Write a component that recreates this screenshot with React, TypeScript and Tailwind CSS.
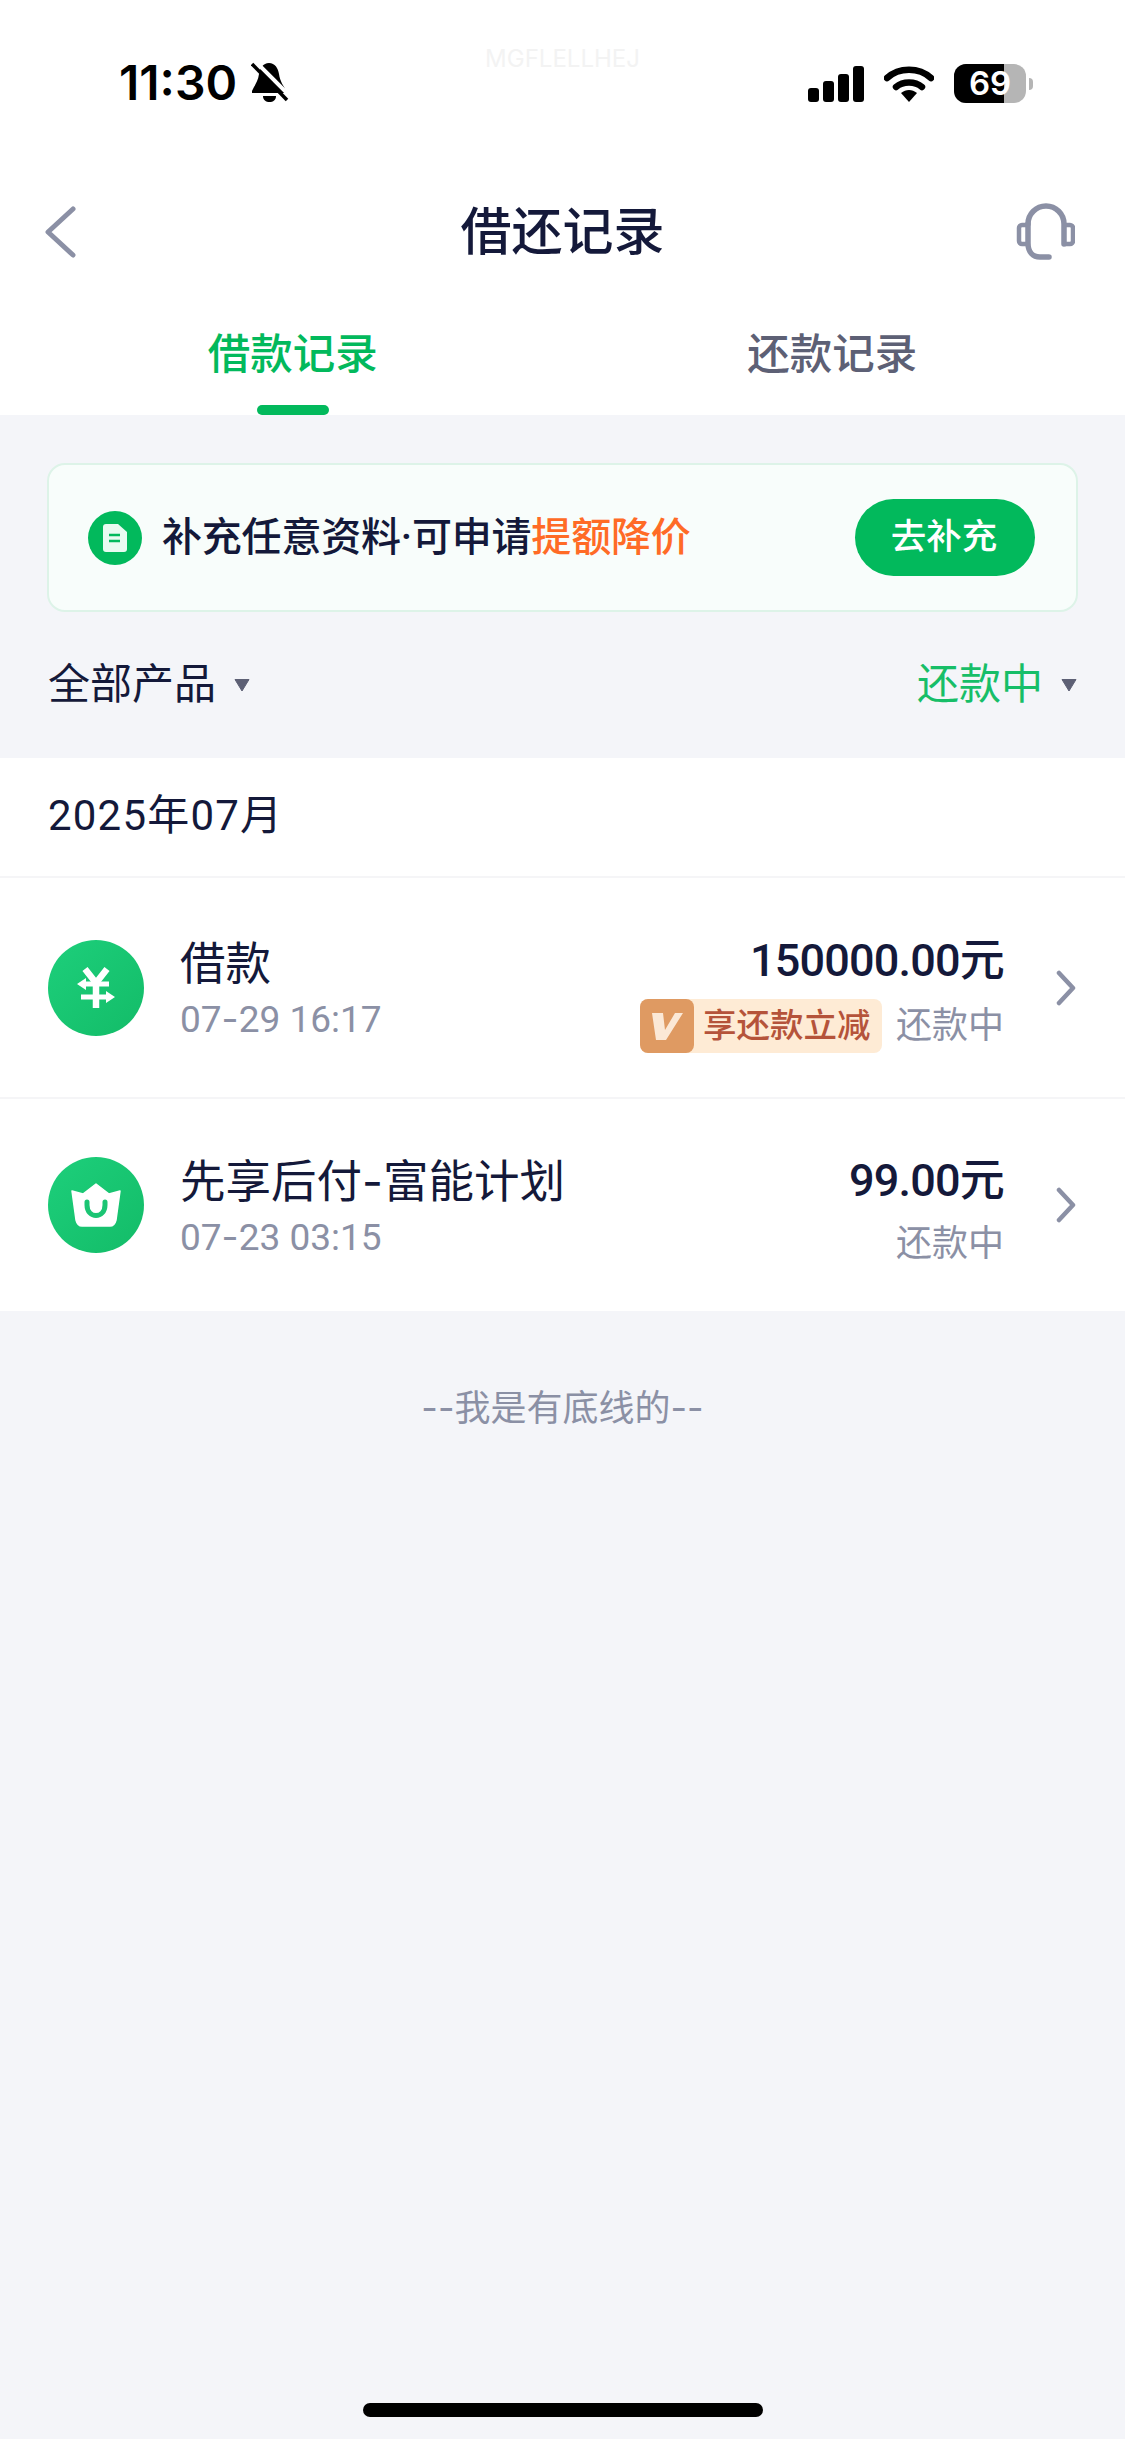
import React from "react";

const font = "font-['Roboto','Noto_Sans_CJK_SC',sans-serif]";

// Roboto's hyphen is too short next to CJK, Inter's is closer to the reference
function withDash(text: string) {
  const parts = text.split("-");
  return parts.map((part, i) => (
    <React.Fragment key={i}>
      {i > 0 && <span className="font-['Inter',sans-serif]">-</span>}
      {part}
    </React.Fragment>
  ));
}

function Chevron() {
  return (
    <svg width="20" height="36" viewBox="0 0 20 36" fill="none" className="shrink-0">
      <path d="M3 3l14 15L3 33" stroke="#8B90A5" strokeWidth="4.5" strokeLinecap="round" strokeLinejoin="round" />
    </svg>
  );
}

function Caret() {
  return (
    <svg width="16" height="14" viewBox="0 0 16 14" className="shrink-0">
      <path d="M1 1.5h14L8 13z" fill="#5D6075" stroke="#5D6075" strokeLinejoin="round" />
    </svg>
  );
}

function YuanIcon() {
  return (
    <svg width="96" height="96" viewBox="0 0 96 96" fill="none">
      <path d="M37 29l11 14 11-14" stroke="#fff" strokeWidth="6.500" />
      <path d="M48 42v26" stroke="#fff" strokeWidth="6.500" />
      <path d="M37 44h24M33 57h27" stroke="#fff" strokeWidth="5" />
      <path d="M29 44l9-6v12zM67 57l-9-6v12z" fill="#fff" />
    </svg>
  );
}

function BasketIcon() {
  return (
    <svg width="96" height="96" viewBox="0 0 96 96" fill="none">
      <path
        d="M24 34l11 3 13-10 13 10 11-3-4 29c-1 4-3 6-6 6H34c-3 0-5-2-6-6z"
        fill="#fff"
        stroke="#fff"
        strokeWidth="1.500"
        strokeLinejoin="round"
      />
      <path d="M39 45v3c0 14 18 14 18 0v-3" stroke="#1BC573" strokeWidth="5" strokeLinecap="round" />
    </svg>
  );
}

function StatusBar() {
  return (
    <div className="relative flex h-[164px] items-start justify-between pl-[119px] pr-[92px] pt-[56px]">
      <div className="absolute left-0 right-0 top-[45px] text-center font-['Inter',sans-serif] text-[24px] leading-[28px] text-[#f3f3f3]">
        MGFLELLHEJ
      </div>
      <div className="flex items-center gap-[14px]">
        <span className="font-['Inter',sans-serif] text-[48px] font-semibold leading-[54px] text-black">11:30</span>
        <svg width="38" height="42" viewBox="0 0 38 42">
          <path d="M18 1c6 0 9 5 10 11 1 8 5 12 7 17v2H1v-2c2-5 6-9 7-17 1-6 4-11 10-11z" fill="#000" />
          <path d="M12 34h13c0 4-3 6-6.500 6S12 38 12 34z" fill="#000" />
          <path d="M4 -1l35 35" stroke="#fff" strokeWidth="4" />
          <path d="M1 2l35 36" stroke="#000" strokeWidth="3.500" />
        </svg>
      </div>
      <div className="flex items-center gap-[20px] pt-[8px]">
        <div className="flex h-[36px] items-end gap-[4px]">
          <div className="h-[14px] w-[11px] rounded-[3px] bg-black" />
          <div className="h-[21px] w-[11px] rounded-[3px] bg-black" />
          <div className="h-[28px] w-[11px] rounded-[3px] bg-black" />
          <div className="h-[36px] w-[11px] rounded-[3px] bg-black" />
        </div>
        <svg width="50" height="36" viewBox="0 0 50 36" fill="none">
          <path d="M3 12c12-11 32-11 44 0" stroke="#000" strokeWidth="6.500" strokeLinecap="round" />
          <path d="M12 21c7-6 19-6 26 0" stroke="#000" strokeWidth="6.500" strokeLinecap="round" />
          <path d="M17 27c5-4 11-4 16 0l-8 9z" fill="#000" />
        </svg>
        <div className="flex items-center gap-[3px]">
          <div className="relative h-[39px] w-[72px] overflow-hidden rounded-[12px] bg-[#b5b5b5]">
            <div className="h-full w-[50px] bg-black" />
            <span className="absolute inset-0 flex items-center justify-center font-['Inter',sans-serif] text-[33px] font-semibold leading-none text-white">
              69
            </span>
          </div>
          <div className="h-[12px] w-[4px] rounded-r-full bg-[#b5b5b5]" />
        </div>
      </div>
    </div>
  );
}

function Row({ icon, title, date, amount, promo }: { icon: React.ReactNode; title: string; date: string; amount: string; promo?: boolean }) {
  return (
    <div className="flex items-center pl-[48px] pr-[49px] first:h-[221px] last:h-[212px] first:border-b-2 first:border-[#f5f5f7]">
      <div className="flex h-[96px] w-[96px] shrink-0 items-center justify-center rounded-full bg-gradient-to-br from-[#1DCF7B] to-[#13BC68]">
        {icon}
      </div>
      <div className="ml-[36px] flex-1 pt-[7px]">
        <div className="text-[45.500px] leading-[55px] text-[#14193A]">{withDash(title)}</div>
        <div className="text-[37px] leading-[53px] text-[#8B90A5]">{withDash(date)}</div>
      </div>
      <div className={`flex flex-col items-end ${promo ? "pt-[11px]" : "pt-[14px]"}`}>
        <div className="text-[45px] font-medium leading-[55px] tracking-[-0.8px] text-[#14193A]">{amount}</div>
        <div className={`flex h-[55px] items-center ${promo ? "mt-[11px]" : "mt-[8px]"}`}>
          {promo && (
            <div className="mr-[14px] flex h-[54px] w-[242px] items-center rounded-[8px] bg-[#FEEBD5]">
              <div className="flex h-[54px] w-[54px] items-center justify-center rounded-[8px] bg-[#DF9A62]">
                <svg width="32" height="32" viewBox="0 0 32 32">
                  <path d="M1 3h11l2 17L24 3h8L15 30H5z" fill="#FBE8D6" />
                </svg>
              </div>
              <span className="ml-[9px] text-[33.500px] font-medium leading-none text-[#B5533A]">享还款立减</span>
            </div>
          )}
          <span className="text-[36px] leading-none text-[#8B90A5]">还款中</span>
        </div>
      </div>
      <div className="ml-[52px]">
        <Chevron />
      </div>
    </div>
  );
}

export default function App() {
  return (
    <div lang="zh-CN" className={`flex h-[2439px] w-[1125px] flex-col overflow-hidden bg-[#F4F5F9] ${font}`}>
      <div className="bg-white">
        <StatusBar />

        {/* nav */}
        <div className="grid h-[136px] grid-cols-[1fr_auto_1fr] items-center px-[50px]">
          <svg width="32" height="52" viewBox="0 0 32 52" fill="none" className="-ml-[6px]">
            <path d="M29 3L4 26l25 23" stroke="#8B90A5" strokeWidth="5" strokeLinecap="round" strokeLinejoin="round" />
          </svg>
          <div className="text-[51px] font-medium leading-none text-[#14193A]">借还记录</div>
          <svg width="60" height="60" viewBox="15 12 60 60" fill="none" className="justify-self-end">
            <path d="M28 34a18 18 0 0 1 36 0v20" stroke="#8B90A5" strokeWidth="5.500" strokeLinecap="round" />
            <path d="M28 34v19c0 9 5 14 12 14h9" stroke="#8B90A5" strokeWidth="5.500" strokeLinecap="round" />
            <path d="M26 35h-4a3 3 0 0 0-3 3v13a3 3 0 0 0 3 3h4" stroke="#8B90A5" strokeWidth="4.500" />
            <path d="M65 35h5a3 3 0 0 1 3 3v13a3 3 0 0 1-3 3h-5" stroke="#8B90A5" strokeWidth="4.500" />
          </svg>
        </div>

        {/* tabs */}
        <div className="grid h-[115px] grid-cols-2 px-[23px]">
          <div className="flex flex-col items-center justify-between pt-[34px]">
            <span className="text-[42.500px] font-medium leading-[42px] text-[#02B95C]">借款记录</span>
            <div className="h-[10px] w-[72px] rounded-full bg-[#02B95C]" />
          </div>
          <div className="pt-[34px] text-center">
            <span className="text-[42.500px] font-medium leading-[42px] text-[#5D6075]">还款记录</span>
          </div>
        </div>
      </div>

      {/* banner */}
      <div className="mx-[47px] mt-[48px] flex h-[149px] items-center justify-between rounded-[18px] border-2 border-[#DDF3E8] bg-[#F8FDFB] pl-[39px] pr-[41px]">
        <div className="flex items-center">
          <div className="flex h-[54px] w-[54px] items-center justify-center rounded-full bg-[#02B95C]">
            <svg width="24" height="28" viewBox="0 0 24 28">
              <path d="M3 0h12l9 8v17c0 2-1 3-3 3H3c-2 0-3-1-3-3V3c0-2 1-3 3-3z" fill="#E9FBF1" />
              <path d="M6 11h11M6 17h11" stroke="#02B95C" strokeWidth="2.500" />
            </svg>
          </div>
          <div className="ml-[20px] text-[40px] font-medium leading-none tracking-[-0.2px] text-[#14193A]">
            补充任意资料·可申请<span className="text-[#FF6B26]">提额降价</span>
          </div>
        </div>
        <div className="flex h-[77px] w-[180px] items-center justify-center rounded-full bg-[#02B95C] pr-[2px] text-[35.500px] font-medium leading-none text-white">
          去补充
        </div>
      </div>

      {/* filters */}
      <div className="flex h-[146px] items-center justify-between px-[48px]">
        <div className="flex items-center gap-[18px]">
          <span className="text-[42px] leading-none text-[#14193A]">全部产品</span>
          <Caret />
        </div>
        <div className="flex items-center gap-[18px]">
          <span className="text-[42px] leading-none text-[#17BE68]">还款中</span>
          <Caret />
        </div>
      </div>

      <div className="bg-white">
        <div className="flex h-[120px] items-center border-b-2 border-[#f5f5f7] pb-[2px] pl-[48px] text-[42px] leading-none tracking-[1.200px] text-[#14193A]">
          2025年07月
        </div>
        <div>
          <Row icon={<YuanIcon />} title="借款" date="07-29 16:17" amount="150000.00元" promo />
          <Row icon={<BasketIcon />} title="先享后付-富能计划" date="07-23 03:15" amount="99.00元" />
        </div>
      </div>

      <div className="mt-[78px] text-center text-[36px] leading-[38px] text-[#8B90A5]">{withDash("--我是有底线的--")}</div>

      {/* home indicator */}
      <div className="mt-auto mb-[22px] h-[14px] w-[400px] self-center rounded-full bg-black" />
    </div>
  );
}
